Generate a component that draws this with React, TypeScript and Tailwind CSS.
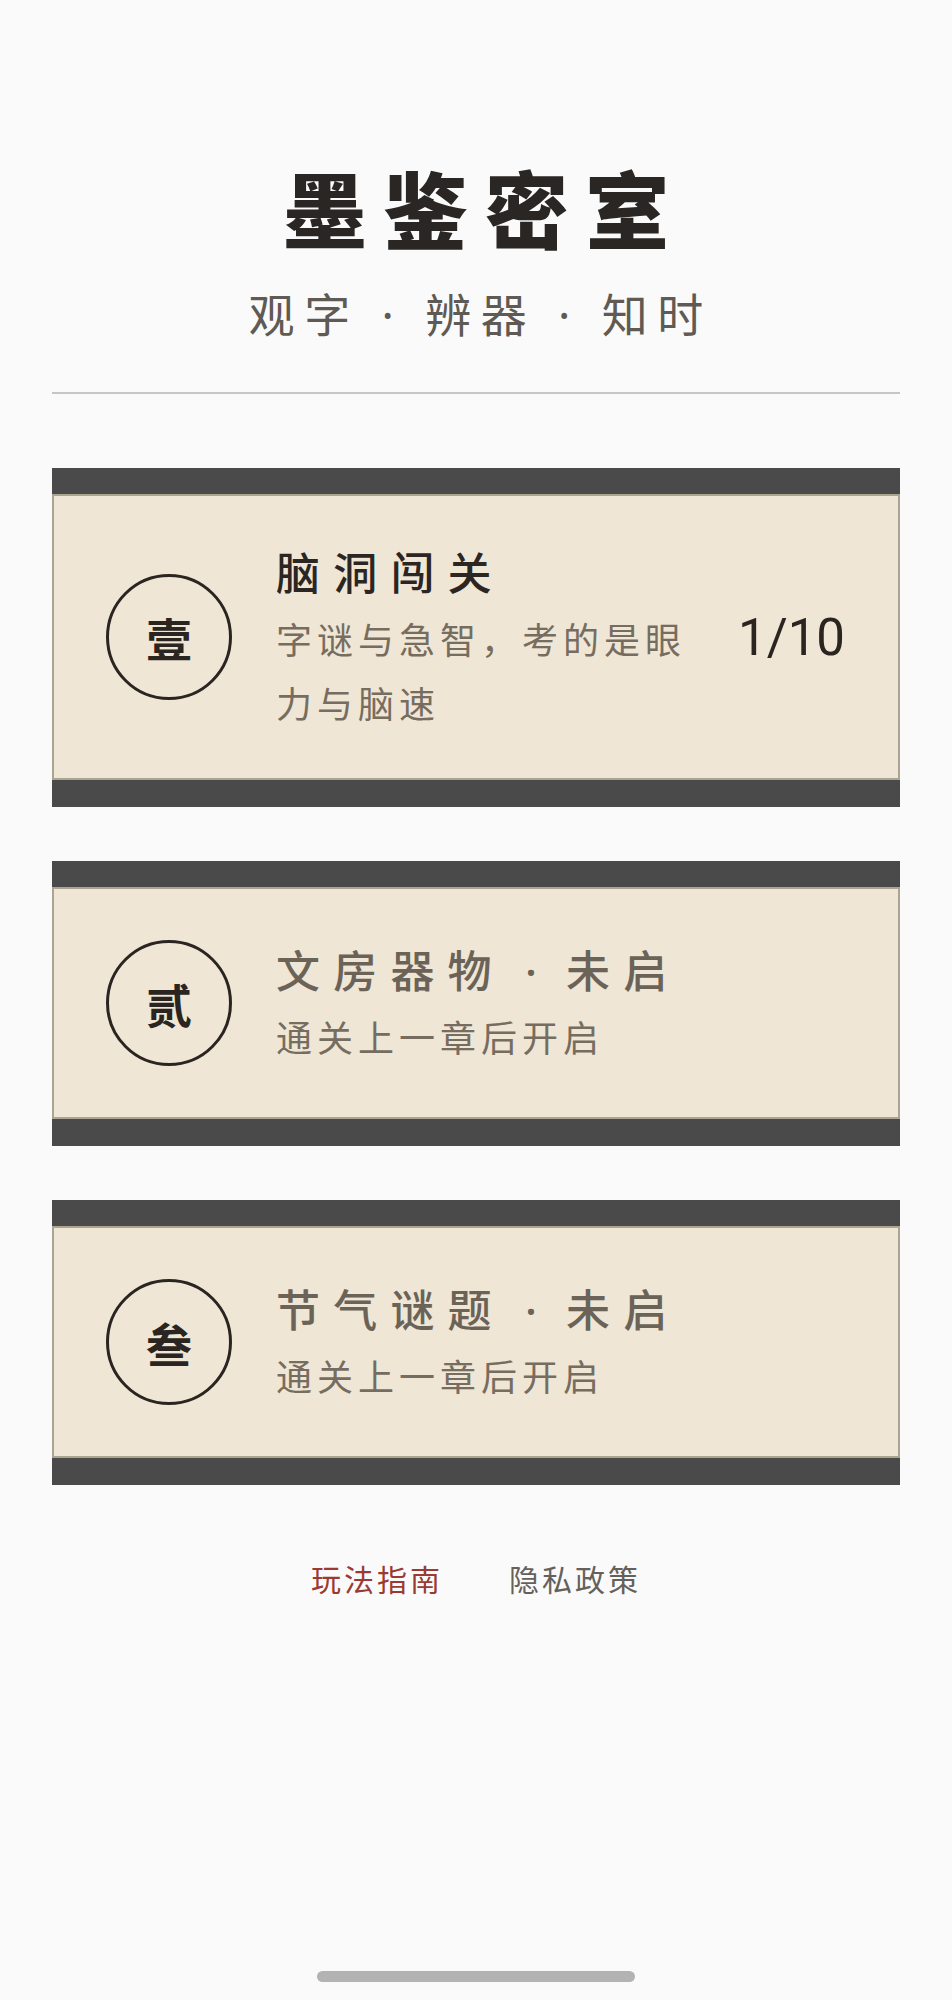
import React from 'react';

const cjk = "font-['Noto_Sans_CJK_SC','Noto_Sans',sans-serif]";
// Latin glyphs (space, middle dot) from Noto Sans so the separators stay narrow
const mixed = "font-['Noto_Sans','Noto_Sans_CJK_SC',sans-serif]";

interface Chapter {
  num: string;
  title: string;
  status?: string;
  desc: string;
  progress?: string;
  locked: boolean;
}

const chapters: Chapter[] = [
  { num: '壹', title: '脑洞闯关', desc: '字谜与急智，考的是眼力与脑速', progress: '1/10', locked: false },
  { num: '贰', title: '文房器物', status: '未启', desc: '通关上一章后开启', locked: true },
  { num: '叁', title: '节气谜题', status: '未启', desc: '通关上一章后开启', locked: true },
];

const ChapterCard: React.FC<{ chapter: Chapter }> = ({ chapter }) => (
  <div className="flex flex-col">
    <div className="h-[26px] bg-[#4a4a4a]" />
    <div className="flex min-h-[232px] items-center border-2 border-[#aaa591] bg-[#efe6d6] py-[44px] pl-[52px] pr-[53px]">
      {/* Seal circle */}
      <div className="flex h-[126px] w-[126px] shrink-0 items-center justify-center rounded-full border-[3px] border-[#2b2521]">
        <span className={`${cjk} text-[46px] font-bold leading-none text-[#2b2521]`}>{chapter.num}</span>
      </div>

      <div className="ml-[44px] flex min-w-0 flex-1 flex-col">
        <div
          className={`${mixed} whitespace-nowrap text-[44px] font-medium leading-[66px] tracking-[0.3em] ${
            chapter.locked ? 'text-[#6b6357]' : 'text-[#2b2623]'
          }`}
        >
          {chapter.title}
          {chapter.status && (
            <>
              <span className="tracking-[0.2em]"> · </span>
              {chapter.status}
            </>
          )}
        </div>
        <div className={`${cjk} text-[36px] leading-[64px] tracking-[5px] text-[#766d60]`}>{chapter.desc}</div>
      </div>

      {chapter.progress && (
        <div className="ml-[22px] shrink-0 font-['Roboto','Liberation_Sans',sans-serif] text-[51px] leading-none text-[#2b2521]">
          {chapter.progress}
        </div>
      )}
    </div>
    <div className="h-[27px] bg-[#4a4a4a]" />
  </div>
);

export default function App() {
  return (
    <div className="flex min-h-[2000px] flex-col bg-[#fafafa]">
      {/* Header */}
      <header className="flex flex-col items-center pt-[156px]">
        <h1 className={`${cjk} pl-[0.2em] text-[84px] font-black leading-[101px] tracking-[0.2em] text-[#2a2623]`}>
          墨鉴密室
        </h1>
        <p className={`${mixed} mt-[27px] pl-[0.21em] text-[46px] leading-[60px] tracking-[0.21em] text-[#5f5a53]`}>
          观字 · 辨器 · 知时
        </p>
      </header>

      <div className="mx-[52px] mt-[48px] h-[2px] bg-[#c6c6c6]" />

      {/* Chapters */}
      <main className="mx-[52px] mt-[74px] flex flex-col gap-[54px]">
        {chapters.map((c) => (
          <ChapterCard key={c.num} chapter={c} />
        ))}
      </main>

      {/* Footer links */}
      <footer className={`${cjk} mt-[71px] flex justify-center gap-[66px] text-[30px] leading-[45px] tracking-[0.1em]`}>
        <a className="text-[#9a3b33]">玩法指南</a>
        <a className="text-[#65615a]">隐私政策</a>
      </footer>

      <div className="flex-1" />
      <div className="mx-auto mb-[18px] h-[11px] w-[318px] rounded-full bg-[#b3b3b3]" />
    </div>
  );
}
